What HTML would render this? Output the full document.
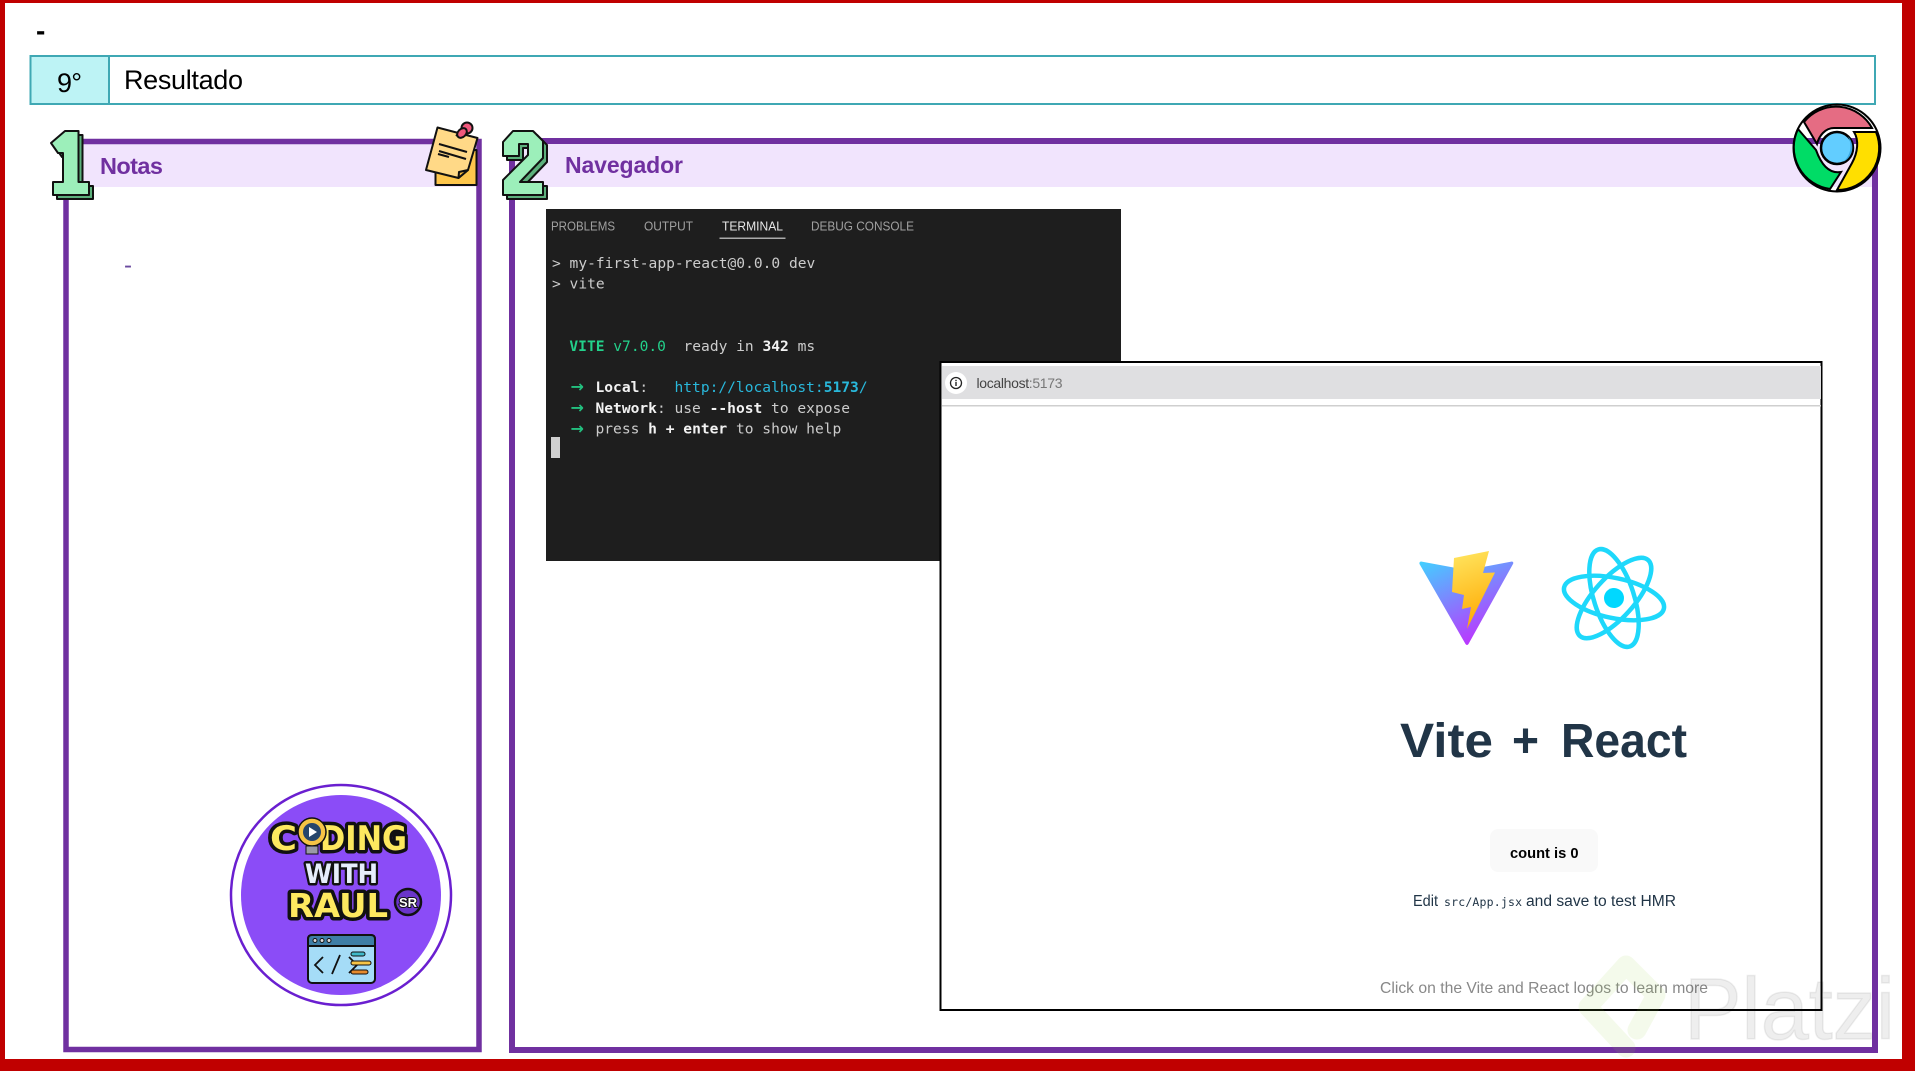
<!DOCTYPE html>
<html lang="es"><head><meta charset="utf-8"><title>Resultado</title>
<style>
html,body{margin:0;padding:0;background:#fff;width:1915px;height:1071px;overflow:hidden}
svg{display:block}
text{font-family:"Liberation Sans",sans-serif;white-space:pre}
.m{font-family:"DejaVu Sans Mono","Liberation Mono",monospace;font-size:14.58px;fill:#cccccc}
.b{font-weight:bold;fill:#f2f2f2}
.tab{font-size:12.5px;fill:#a0a0a0}
.arr{font-family:"DejaVu Sans",sans-serif;font-size:16px;font-weight:bold;fill:#23c07f}
.lg{font-family:"DejaVu Sans","Liberation Sans",sans-serif;font-weight:bold;stroke:#111;stroke-width:7px;paint-order:stroke;stroke-linejoin:round}
</style></head><body>
<svg xmlns="http://www.w3.org/2000/svg" width="1915" height="1071" viewBox="0 0 1915 1071">
<defs>
<linearGradient id="vg" x1="0" y1="0" x2="0.55" y2="1"><stop offset="0" stop-color="#41d1ff"/><stop offset="1" stop-color="#bd34fe"/></linearGradient>
<linearGradient id="bg" x1="0.3" y1="0" x2="0.5" y2="1"><stop offset="0" stop-color="#ffe35c"/><stop offset="1" stop-color="#ffa800"/></linearGradient>
</defs>
<rect width="1915" height="1071" fill="#fff"/>
<!-- red frame -->
<rect x="0" y="0" width="1915" height="3" fill="#c00000"/>
<rect x="0" y="0" width="5" height="1071" fill="#c00000"/>
<rect x="1902" y="0" width="13" height="1071" fill="#c00000"/>
<rect x="0" y="1059" width="1915" height="12" fill="#c00000"/>
<text x="36" y="40" font-size="28" font-weight="bold" fill="#000">-</text>
<!-- title bar -->
<rect x="30.500" y="56" width="1844.500" height="48" fill="#fff" stroke="#3fa8b4" stroke-width="2"/>
<rect x="31.500" y="57" width="76.500" height="46" fill="#bdf3f5"/>
<rect x="108" y="56" width="2" height="48" fill="#3fa8b4"/>
<text x="57" y="92" font-size="27" fill="#000" textLength="25">9°</text>
<text x="124" y="89" font-size="27" fill="#000" textLength="119">Resultado</text>
<!-- panel 1 -->
<rect x="69" y="144" width="407" height="43" fill="#f1e4fd"/>
<rect x="66" y="141.500" width="413" height="908" fill="none" stroke="#7030a0" stroke-width="5.500"/>
<text x="100" y="174" font-size="23.500" font-weight="bold" fill="#7030a0" textLength="63">Notas</text>
<text x="124" y="273" font-size="24" fill="#6a4a9f">-</text>
<!-- panel 2 -->
<rect x="515" y="144" width="1357" height="43" fill="#f1e4fd"/>
<rect x="512" y="141" width="1363" height="909" fill="none" stroke="#7030a0" stroke-width="6"/>
<text x="565" y="173" font-size="23" font-weight="bold" fill="#7030a0" textLength="118">Navegador</text>
<!-- digit 1 -->
<g stroke="#111" stroke-width="2" stroke-linejoin="round">
<path transform="translate(4,4)" d="M65,131H78.500V182H89V195H53V182H63V153H58L51,143Z" fill="#5cb07c"/>
<path d="M65,131H78.500V182H89V195H53V182H63V153H58L51,143Z" fill="#9cefba"/>
<!-- digit 2 -->
<path transform="translate(4,4)" d="M503,156V142L513,131H533L543,141V158L520,182H543V195H503V180L528,155V144H519V156Z" fill="#5cb07c"/>
<path d="M503,156V142L513,131H533L543,141V158L520,182H543V195H503V180L528,155V144H519V156Z" fill="#9cefba"/>
</g>
<!-- note icon -->
<g stroke="#111" stroke-width="2" stroke-linejoin="round">
<rect x="435.500" y="150" width="41" height="35" fill="#fec64c"/>
<path d="M437.500,127.500L477.500,138L468,170L458.500,178L426,170Z" fill="#ffd987"/>
<path d="M468,170L459,172L458.500,178Z" fill="#f4b63c"/>
<path d="M439,144L467,152M439,151L466,159M438,154L449,157" fill="none"/>
<path d="M456,136L466,127" fill="none"/>
<circle cx="467" cy="128" r="5.500" fill="#f0587c"/>
<ellipse cx="462" cy="133" rx="5.500" ry="4" fill="#f0587c" transform="rotate(-45 462 133)"/>
</g>
<!-- chrome icon -->
<g transform="translate(1837,148)">
<circle r="43.500" fill="none" stroke="#000" stroke-width="2"/>
<path d="M-33,-26A41,41 0 0 1 35,-20H-3C-12,-20 -18,-12 -20,-4Z" fill="#e56c83" stroke="#000" stroke-width="2"/>
<path d="M-39,-19A42,42 0 0 0 -7,41L4,24C-8,26 -16,16 -21,2Z" fill="#00dc66" stroke="#000" stroke-width="2"/>
<path d="M39,-16A42,42 0 0 1 0,42L15,15C21,4 22,-8 17,-16Z" fill="#ffdf00" stroke="#000" stroke-width="2"/>
<circle r="16" fill="#62cdff" stroke="#000" stroke-width="2.500"/>
<path d="M11,-11.500A16,16 0 0 1 6,14A20,20 0 0 0 11,-11.500Z" fill="#3aa6e0"/>
</g>
<!-- terminal -->
<rect x="546" y="209" width="575" height="352" fill="#1e1e1e"/>
<text class="tab" x="551" y="230.500" textLength="64" lengthAdjust="spacingAndGlyphs">PROBLEMS</text>
<text class="tab" x="644" y="230.500" textLength="49" lengthAdjust="spacingAndGlyphs">OUTPUT</text>
<text class="tab" x="722" y="230.500" textLength="61" lengthAdjust="spacingAndGlyphs" style="fill:#e7e7e7">TERMINAL</text>
<rect x="719.500" y="237.500" width="66" height="1.500" fill="#aaa"/>
<text class="tab" x="811" y="230.500" textLength="103" lengthAdjust="spacingAndGlyphs">DEBUG CONSOLE</text>
<text class="m" x="552" y="268">&gt; my-first-app-react@0.0.0 dev</text>
<text class="m" x="552" y="288.500">&gt; vite</text>
<text class="m" x="569.400" y="351"><tspan font-weight="bold" fill="#23d18b">VITE</tspan><tspan fill="#23d18b"> v7.0.0</tspan>  ready in <tspan class="b">342</tspan> ms</text>
<text class="arr" x="570.500" y="392">→</text>
<text class="m" x="595.500" y="392"><tspan class="b">Local</tspan>:   <tspan fill="#29b8db">http://localhost:</tspan><tspan fill="#29b8db" font-weight="bold">5173</tspan><tspan fill="#29b8db">/</tspan></text>
<text class="arr" x="570.500" y="413">→</text>
<text class="m" x="595.500" y="413"><tspan class="b">Network</tspan>: use <tspan class="b">--host</tspan> to expose</text>
<text class="arr" x="570.500" y="434">→</text>
<text class="m" x="595.500" y="433.500">press <tspan class="b">h</tspan> <tspan class="b">+</tspan> <tspan class="b">enter</tspan> to show help</text>
<rect x="551" y="437" width="9" height="21" fill="#cfcfcf"/>
<!-- browser -->
<rect x="940.500" y="362" width="881" height="648" fill="#fff" stroke="#000" stroke-width="2"/>
<rect x="942" y="366" width="879" height="33" fill="#dfdfe1"/>
<rect x="942" y="405" width="879" height="1.500" fill="#cfcfcf"/>
<circle cx="956" cy="383" r="11" fill="#fff"/>
<circle cx="956" cy="383" r="5.500" fill="none" stroke="#222" stroke-width="1.300"/>
<rect x="955.300" y="382" width="1.400" height="4" fill="#222"/><rect x="955.300" y="379.800" width="1.400" height="1.400" fill="#222"/>
<text x="976.500" y="388" font-size="14" textLength="86" fill="#444">localhost<tspan fill="#777">:5173</tspan></text>
<!-- vite logo -->
<path d="M1421,561.500L1467,570L1512,561.500Q1514,562 1513,564L1468.500,644Q1467,646 1465.500,644L1419.500,564Q1419,562 1421,561.500Z" fill="url(#vg)"/>
<path d="M1454,558L1489,551L1483,573L1495,572.500L1467,629L1471,607L1462,609L1464,595L1452,592Z" fill="url(#bg)"/>
<!-- react logo -->
<g transform="translate(1614,598) rotate(12)" fill="none" stroke="#1ed8fb" stroke-width="4.500">
<circle r="10" fill="#00d8ff" stroke="none"/>
<ellipse rx="51" ry="20"/>
<ellipse rx="51" ry="20" transform="rotate(60)"/>
<ellipse rx="51" ry="20" transform="rotate(120)"/>
</g>
<g font-size="48" font-weight="bold" fill="#213547">
<text x="1400" y="757" textLength="93" lengthAdjust="spacingAndGlyphs">Vite</text>
<text x="1512" y="757" textLength="27" lengthAdjust="spacingAndGlyphs">+</text>
<text x="1561" y="757" textLength="126" lengthAdjust="spacingAndGlyphs">React</text>
</g>
<rect x="1490" y="829" width="108" height="43" rx="8" fill="#f9f9f9"/>
<text x="1510" y="858" font-size="15" font-weight="bold" fill="#000" textLength="68.500" lengthAdjust="spacingAndGlyphs">count is 0</text>
<text x="1413" y="906" font-size="15.500" fill="#213547" textLength="25" lengthAdjust="spacingAndGlyphs">Edit</text>
<text x="1444" y="906" font-size="11.500" fill="#213547" textLength="78" style="font-family:'DejaVu Sans Mono',monospace">src/App.jsx</text>
<text x="1526" y="906" font-size="15.500" fill="#213547" textLength="150" lengthAdjust="spacingAndGlyphs">and save to test HMR</text>
<text x="1380" y="993" font-size="16" fill="#888" textLength="328" lengthAdjust="spacingAndGlyphs">Click on the Vite and React logos to learn more</text>
<!-- logo -->
<circle cx="341" cy="895" r="110" fill="#fff" stroke="#6a1fd0" stroke-width="2.500"/>
<circle cx="341" cy="895" r="100" fill="#8b4cf7"/>
<g font-size="34">
<text class="lg" x="270" y="850" fill="#fde95f" textLength="27" lengthAdjust="spacingAndGlyphs">C</text>
<text class="lg" x="320" y="850" fill="#fde95f" textLength="87" lengthAdjust="spacingAndGlyphs">DING</text>
</g>
<circle cx="312" cy="832" r="14" fill="#f6c445" stroke="#111" stroke-width="1.500"/>
<circle cx="312" cy="832" r="9" fill="#26456b"/>
<path d="M309,827L317,832L309,837Z" fill="#fff"/>
<rect x="306" y="846" width="12" height="8" fill="#9a9aa8" stroke="#111"/>
<text class="lg" x="305" y="883" font-size="27" fill="#e6eefc" textLength="73" lengthAdjust="spacingAndGlyphs" style="stroke-width:5px">WITH</text>
<text class="lg" x="288" y="917" font-size="33" fill="#fde95f" textLength="100" lengthAdjust="spacingAndGlyphs">RAUL</text>
<circle cx="408" cy="902" r="13" fill="#6a35c9" stroke="#111" stroke-width="2.500"/>
<text x="399" y="907" font-size="13" font-weight="bold" fill="#fff" stroke="#111" stroke-width="2" style="paint-order:stroke" textLength="18">SR</text>
<g stroke="#111" stroke-width="2">
<rect x="308" y="935" width="67" height="48" rx="4" fill="#a5dcf7"/>
<path d="M308,946V939Q308,935 312,935H371Q375,935 375,939V946Z" fill="#3e7ea6"/>
<circle cx="315" cy="940.500" r="2" fill="#ddd" stroke-width="1"/><circle cx="322" cy="940.500" r="2" fill="#ddd" stroke-width="1"/><circle cx="329" cy="940.500" r="2" fill="#ddd" stroke-width="1"/>
<path d="M323,957L315,965L323,973M332,974L340,955M349,957L357,965L349,973" fill="none" stroke-width="1.800"/>
<rect x="351" y="952" width="14" height="4" rx="2" fill="#3fb9c9" stroke-width="1"/>
<rect x="351" y="961" width="20" height="4" rx="2" fill="#f6c445" stroke-width="1"/>
<rect x="351" y="970" width="17" height="4" rx="2" fill="#e58a2e" stroke-width="1"/>
</g>
<!-- watermark -->
<path d="M1637,1030L1656,995L1626,965L1588,1007L1626,1048" fill="none" stroke="#98ca3f" stroke-opacity="0.100" stroke-width="19" stroke-linejoin="round" stroke-linecap="round"/>
<text x="1684" y="1039" font-size="87" fill="#000" fill-opacity="0.065" stroke="#000" stroke-opacity="0.065" stroke-width="1.500" textLength="211" lengthAdjust="spacingAndGlyphs">Platzi</text>
</svg>
</body></html>
